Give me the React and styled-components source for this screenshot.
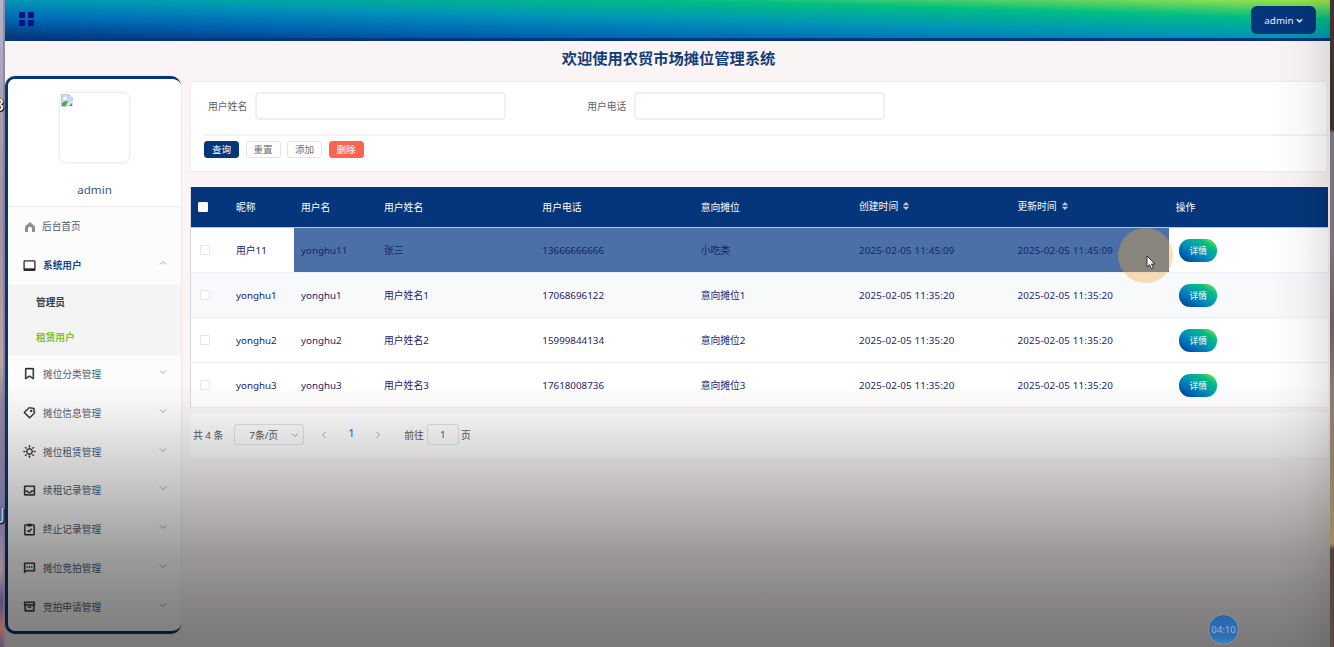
// src/App.jsx
import React from 'react';
import styled, { createGlobalStyle, css } from 'styled-components';
import {
  RiBookmarkLine,
  RiPriceTag3Line,
  RiSunLine,
  RiInboxLine,
  RiMessage2Line,
  RiArchiveLine,
} from 'react-icons/ri';

const GlobalStyle = createGlobalStyle`
  * { box-sizing: border-box; }
  body {
    margin: 0;
    overflow: hidden;
    font-family: 'Noto Sans', 'Noto Sans CJK SC', sans-serif;
    font-size: 9.8px;
    color: #606266;
  }
  button, input { font-family: inherit; }
`;

const rainbow = 'linear-gradient(to right top, #05367b, #0067b4, #0096b7, #00be83, #a8e544)';

const Desktop = styled.div`
  display: grid;
  grid-template-columns: 5px 1fr 4px;
  height: 647px;
  overflow: hidden;
`;

const Wallpaper = styled.div`
  position: relative;
  overflow: hidden;
  background: ${(p) =>
    p.$side === 'left'
      ? 'linear-gradient(#b3b3cf 0, #a9a4bf 12%, #a497ab 25%, #a291a8 35%, #b8a5a9 56%, #8d84a0 62%, #77709a 80%, #a08a98 88%, #59507c 93%, #a3675f 97%, #62506b 100%)'
      : 'linear-gradient(#40352f 0, #3a302b 20%, #77737e 20.5%, #7d747d 38%, #6f5b63 50%, #887a74 60%, #8f7c6a 70%, #a08a62 84%, #54403b 85%, #5e4b46 100%)'};
  box-shadow: ${(p) => (p.$side === 'left' ? 'inset -2px 0 0 rgba(120, 118, 125, 0.55)' : 'none')};
`;

const DesktopLabel = styled.span`
  position: absolute;
  right: ${(p) => p.$right}px;
  top: ${(p) => p.$top}px;
  font-size: 17px;
  font-weight: 500;
  line-height: 22px;
  color: ${(p) => p.$color || '#fff'};
  text-shadow: 1px 1px 1px #000, 0 0 2px #000;
`;

const AppWindow = styled.div`
  position: relative;
  display: flex;
  flex-direction: column;
  min-width: 0;
  background: #faf5f4;
`;

const Header = styled.header`
  display: flex;
  align-items: center;
  justify-content: space-between;
  height: 41px;
  padding: 0 14px;
  border-bottom: 3px solid #05367b;
  background: ${rainbow};
`;

const MenuToggle = styled.div`
  display: grid;
  grid-template-columns: 6px 6px;
  grid-auto-rows: 6px;
  gap: 2px 3px;

  i {
    background: #101080;
    border-radius: 1px;
  }
`;

const UserButton = styled.button`
  display: flex;
  align-items: center;
  justify-content: center;
  gap: 2px;
  width: 65px;
  height: 28px;
  margin-top: 2px;
  padding: 0;
  border: none;
  border-radius: 6px;
  background: #05367b;
  color: #e8eef7;
  font-size: 9.8px;
`;

const Body = styled.div`
  display: flex;
  gap: 9px;
`;

const Aside = styled.aside`
  display: flex;
  flex-direction: column;
  width: 176px;
  height: 558px;
  margin-top: 35px;
  border: 3px solid #05367b;
  border-right: none;
  border-radius: 10px;
  background: #fcfcfc;
  box-shadow: 0 0 2px rgba(0, 0, 0, 0.15);
  overflow: hidden;
`;

const Profile = styled.div`
  display: flex;
  flex-direction: column;
  align-items: center;
  height: 128px;
  flex: none;
  padding-top: 13px;
  background: #fff;
  border-bottom: 1px solid #ebebeb;
  color: #3d5878;
  font-size: 11.6px;
  line-height: 16px;
`;

const Avatar = styled.div`
  width: 71px;
  height: 71px;
  margin-bottom: 19px;
  padding: 1px;
  border: 1px solid #ededed;
  border-radius: 7px;
  box-shadow: 0 0 3px rgba(0, 0, 0, 0.08);

  svg { display: block; }
`;

const MenuItem = styled.div`
  display: flex;
  align-items: center;
  flex: none;
  height: 38.8px;
  padding: 0 14px 0 15px;
  color: ${(p) => (p.$open ? '#1d4684' : '#4c5b70')};
  font-size: 9.7px;
  font-weight: ${(p) => (p.$open ? 600 : 400)};

  > svg:first-child {
    width: 13px;
    height: 13px;
    margin-right: 7px;
    color: #2b2b2b;
    stroke-width: 0.7;
  }

  > svg:last-child { margin-bottom: 4px; }

  > span { flex: 1; }
`;

const HomeItem = styled(MenuItem)`
  padding-left: 16px;

  > svg:first-child {
    width: 12px;
    height: 12px;
    margin: 1px 6px 0 0;
    color: #8b9096;
  }
`;

const SubMenu = styled.div`
  flex: none;
  height: 70px;
  background: #f4f4f4;
`;

const SubItem = styled.div`
  height: 35px;
  padding-left: 28px;
  line-height: 35px;
  font-size: 9.7px;
  font-weight: 600;
  color: ${(p) => (p.$active ? '#7cc325' : '#36404c')};
`;

const Main = styled.main`
  flex: 1;
  min-width: 0;
  padding-right: 2px;
`;

const Title = styled.h1`
  height: 40px;
  margin: 0;
  padding-right: 181px;
  text-align: center;
  color: #123c7c;
  font-size: 15.25px;
  font-weight: 600;
  line-height: 35px;
`;

const SearchPanel = styled.section`
  height: 91px;
  padding: 10px 0 0 14px;
  background: #fff;
  border: 1px solid #eeecec;
`;

const Fields = styled.div`
  display: flex;
  gap: 81px;
  height: 44px;
  padding-left: 3px;
  border-bottom: 2px solid #f3f3f4;
`;

const Field = styled.label`
  display: flex;
  align-items: center;
  gap: 8px;
  height: 28px;
`;

const Input = styled.input`
  width: 251px;
  height: 28px;
  border: 2px solid #f0f0f1;
  border-radius: 4px;
  background: #fff;
`;

const Actions = styled.div`
  display: flex;
  gap: 6.5px;
  margin-left: -1px;
  padding-top: 5px;
`;

const tones = {
  primary: css`background: #05367b; border-color: #05367b; color: #fff;`,
  danger: css`background: #fa6450; border-color: #fa6450; color: #fff;`,
};

const ActionButton = styled.button`
  width: 35px;
  height: 17px;
  padding: 0;
  border: 1px solid #e3e4e6;
  border-radius: 3px;
  background: #fff;
  color: #6d6f73;
  font-size: 9.6px;
  line-height: 15px;
  ${(p) => tones[p.$tone]}
`;

const Table = styled.section`
  margin-top: 15px;
  border-left: 1px solid #d5d8de;
`;

const Row = styled.div`
  display: grid;
  grid-template-columns: 38px 65px 83px repeat(5, 158.35px) 1fr;
  height: 45px;
  border-bottom: 1px solid #ebeef5;
  background: ${(p) => (p.$striped ? '#f8f9fb' : '#fff')};
  color: #23236f;
`;

const HeadRow = styled(Row)`
  height: 41px;
  border-bottom: 1px solid #b8c6da;
  background: #05367b;
  color: #fff;
`;

const Cell = styled.div`
  display: flex;
  align-items: center;
  gap: 4px;
  padding-left: 7px;
  white-space: nowrap;
  background: ${(p) => (p.$selected ? '#4a70a7' : 'transparent')};
  color: ${(p) => (p.$selected ? '#17216f' : 'inherit')};
  padding-bottom: ${(p) => (p.$sortable ? '3px' : 0)};
  letter-spacing: ${(p) => (p.$date ? '0.16px' : 'normal')};
`;

const Check = styled.i`
  width: 10px;
  height: 10px;
  margin-left: ${(p) => (p.$head ? 0 : 2)}px;
  border: 1px solid ${(p) => (p.$head ? '#fff' : '#e6e6e8')};
  border-radius: 1px;
  background: #fff;
`;

const DetailButton = styled.button`
  width: 38px;
  height: 23px;
  margin-left: 3.5px;
  padding: 0;
  border: none;
  border-radius: 11px;
  background: ${rainbow};
  color: #fff;
  font-size: 8.7px;
`;

const Pager = styled.section`
  display: flex;
  align-items: center;
  height: 44px;
  margin-top: 5px;
  padding: 0 0 1px 3px;
  background: #fbfcfb;
  color: #55575b;
`;

const PageSize = styled.div`
  display: flex;
  align-items: center;
  justify-content: space-between;
  width: 70px;
  height: 21px;
  margin-left: 11px;
  padding: 0 4px 0 14px;
  border: 1px solid #dfe0e2;
  border-radius: 3px;
`;

const PageNumber = styled.span`
  width: 34px;
  text-align: center;
  color: #3a8ee6;
  font-weight: 600;
  padding-bottom: 2px;
`;

const JumpBox = styled.span`
  width: 32px;
  height: 21px;
  margin: 0 2px 0 3px;
  border: 1px solid #dfe0e2;
  border-radius: 3px;
  line-height: 19px;
  text-align: center;
`;

const PageArrow = styled.span`
  display: flex;
  margin-left: ${(p) => p.$left || 0}px;
  margin-right: ${(p) => p.$right || 0}px;
`;

// darkens the window towards the bottom and the right edge
const Shade = styled.div`
  position: absolute;
  inset: 0;
  pointer-events: none;
  background:
    linear-gradient(to right, transparent 95.5%, rgba(0, 0, 0, 0.03) 98%, rgba(0, 0, 0, 0.1) 100%),
    linear-gradient(
      transparent 385px,
      rgba(0, 0, 0, 0.04) 408px,
      rgba(0, 0, 0, 0.14) 453px,
      rgba(0, 0, 0, 0.28) 512px,
      rgba(0, 0, 0, 0.38) 555px,
      rgba(0, 0, 0, 0.45) 598px,
      rgba(0, 0, 0, 0.515) 647px
    );
`;

const ClickHalo = styled.div`
  position: absolute;
  left: 1113px;
  top: 228px;
  width: 55px;
  height: 55px;
  border-radius: 50%;
  background: rgba(244, 170, 60, 0.37);
`;

const Pointer = styled.svg`
  position: absolute;
  left: 1141px;
  top: 255px;
`;

const Timer = styled.div`
  position: absolute;
  left: 1203px;
  top: 614px;
  width: 31px;
  height: 31px;
  border: 1px solid #8793a0;
  border-radius: 50%;
  background: linear-gradient(#2767ad, #2d70b4 75%, #3a88bf);
  color: #a3b5c8;
  font-size: 9.6px;
  line-height: 29px;
  text-align: center;
`;

const Chevron = ({ dir = 'down', size = 8, color = '#a0a5ad', width = 1 }) => {
  const paths = {
    down: 'M1 2.5 L4 5.5 L7 2.5',
    up: 'M1 5.5 L4 2.5 L7 5.5',
    left: 'M5.5 1 L2.5 4 L5.5 7',
    right: 'M2.5 1 L5.5 4 L2.5 7',
  };
  return (
    <svg width={size} height={size} viewBox="0 0 8 8" fill="none" stroke={color} strokeWidth={width}>
      <path d={paths[dir]} />
    </svg>
  );
};

const SortIcon = () => (
  <svg width="8" height="10" viewBox="0 0 8 10" fill="#c3cbd8">
    <path d="M4 1 L7.2 4.2 H0.8 Z M4 9 L7.2 5.8 H0.8 Z" />
  </svg>
);

const HomeIcon = () => (
  <svg viewBox="0 0 12 12" fill="currentColor">
    <path d="M6 1 L11 5.4 V11 H8 V7.8 A2 2 0 0 0 4 7.8 V11 H1 V5.4 Z" />
  </svg>
);

const ScreenIcon = () => (
  <svg viewBox="0 0 12 12" fill="none">
    <g stroke="currentColor">
      <rect x="1" y="1.7" width="10" height="8.8" rx="0.6" strokeWidth="1.2" />
      <path d="M1 9.6 H11" strokeWidth="2" />
    </g>
  </svg>
);

const ClipboardIcon = () => (
  <svg viewBox="0 0 12 12" fill="none">
    <g stroke="currentColor" strokeWidth="1.3">
      <rect x="1.7" y="1.7" width="8.6" height="9.2" rx="0.4" />
      <path d="M4 6.6 L5.5 8 L8 5.4" />
    </g>
    <path d="M4 0.6 H8 V3.2 H4 Z" fill="currentColor" />
  </svg>
);

const BrokenImage = () => (
  <svg width="12" height="13" viewBox="0 0 12 13">
    <path d="M0.5 0.5 H8 L11.5 4 V12.5 H0.5 Z" fill="#c7dbf5" stroke="#b9bfc6" strokeWidth="0.8" />
    <path d="M8 0.5 V4 H11.5 Z" fill="#eef3f9" stroke="#b9bfc6" strokeWidth="0.6" />
    <circle cx="4" cy="4.2" r="1.6" fill="#fff" />
    <path d="M1 12 V9.4 Q4 6 7 7.6 L4.5 12 Z" fill="#55a348" />
    <path d="M6 12.8 L11.8 6.5 V12.8 Z" fill="#fff" />
    <path d="M7.8 12 L11.2 8.5 V12 Z" fill="#55a348" />
  </svg>
);

const menus = [
  { label: '摊位分类管理', icon: RiBookmarkLine },
  { label: '摊位信息管理', icon: RiPriceTag3Line },
  { label: '摊位租赁管理', icon: RiSunLine },
  { label: '续租记录管理', icon: RiInboxLine },
  { label: '终止记录管理', icon: ClipboardIcon },
  { label: '摊位竞拍管理', icon: RiMessage2Line },
  { label: '竞拍申请管理', icon: RiArchiveLine },
];

const columns = ['昵称', '用户名', '用户姓名', '用户电话', '意向摊位', '创建时间', '更新时间', '操作'];

const users = [
  ['用户11', 'yonghu11', '张三', '13666666666', '小吃类', '2025-02-05 11:45:09', '2025-02-05 11:45:09'],
  ['yonghu1', 'yonghu1', '用户姓名1', '17068696122', '意向摊位1', '2025-02-05 11:35:20', '2025-02-05 11:35:20'],
  ['yonghu2', 'yonghu2', '用户姓名2', '15999844134', '意向摊位2', '2025-02-05 11:35:20', '2025-02-05 11:35:20'],
  ['yonghu3', 'yonghu3', '用户姓名3', '17618008736', '意向摊位3', '2025-02-05 11:35:20', '2025-02-05 11:35:20'],
];

const Sidebar = () => (
  <Aside>
    <Profile>
      <Avatar><BrokenImage /></Avatar>
      admin
    </Profile>
    <HomeItem>
      <HomeIcon />
      <span>后台首页</span>
    </HomeItem>
    <MenuItem $open>
      <ScreenIcon />
      <span>系统用户</span>
      <Chevron dir="up" />
    </MenuItem>
    <SubMenu>
      <SubItem>管理员</SubItem>
      <SubItem $active>租赁用户</SubItem>
    </SubMenu>
    {menus.map(({ label, icon: Icon }) => (
      <MenuItem key={label}>
        <Icon stroke="currentColor" />
        <span>{label}</span>
        <Chevron />
      </MenuItem>
    ))}
  </Aside>
);

const UserTable = () => (
  <Table>
    <HeadRow>
      <Cell><Check $head /></Cell>
      {columns.map((name) => {
        const sortable = name.endsWith('时间');
        return (
          <Cell key={name} $sortable={sortable}>
            {name}
            {sortable && <SortIcon />}
          </Cell>
        );
      })}
    </HeadRow>
    {users.map((user, row) => (
      <Row key={user[1]} $striped={row === 1}>
        <Cell><Check /></Cell>
        {user.map((value, col) => (
          <Cell key={col} $selected={row === 0 && col > 0} $date={col > 4}>{value}</Cell>
        ))}
        <Cell><DetailButton>详情</DetailButton></Cell>
      </Row>
    ))}
  </Table>
);

const Pagination = () => (
  <Pager>
    共 4 条
    <PageSize>7条/页 <Chevron /></PageSize>
    <PageArrow $left={16} $right={6}><Chevron dir="left" /></PageArrow>
    <PageNumber>1</PageNumber>
    <PageArrow $left={6} $right={22}><Chevron dir="right" /></PageArrow>
    前往
    <JumpBox>1</JumpBox>
    页
  </Pager>
);

const App = () => (
  <>
    <GlobalStyle />
    <Desktop>
      <Wallpaper $side="left">
        <DesktopLabel $top={94} $right={1}>3</DesktopLabel>
        <DesktopLabel $top={503} $right={0} $color="#8fd0f5">J</DesktopLabel>
      </Wallpaper>
      <AppWindow>
        <Header>
          <MenuToggle><i /><i /><i /><i /></MenuToggle>
          <UserButton>
            admin <Chevron size={7} color="#e8eef7" width={1.8} />
          </UserButton>
        </Header>
        <Body>
          <Sidebar />
          <Main>
            <Title>欢迎使用农贸市场摊位管理系统</Title>
            <SearchPanel>
              <Fields>
                <Field>用户姓名 <Input /></Field>
                <Field>用户电话 <Input /></Field>
              </Fields>
              <Actions>
                <ActionButton $tone="primary">查询</ActionButton>
                <ActionButton>重置</ActionButton>
                <ActionButton>添加</ActionButton>
                <ActionButton $tone="danger">删除</ActionButton>
              </Actions>
            </SearchPanel>
            <UserTable />
            <Pagination />
          </Main>
        </Body>
        <Shade />
        <ClickHalo />
        <Pointer width="10" height="15" viewBox="0 0 10 15">
          <path d="M1 1 V12 L3.6 9.7 L5.4 13.8 L7.3 13 L5.5 9 H9 Z" fill="#fff" stroke="#222" strokeWidth="0.9" />
        </Pointer>
        <Timer>04:10</Timer>
      </AppWindow>
      <Wallpaper $side="right" />
    </Desktop>
  </>
);

export default App;
